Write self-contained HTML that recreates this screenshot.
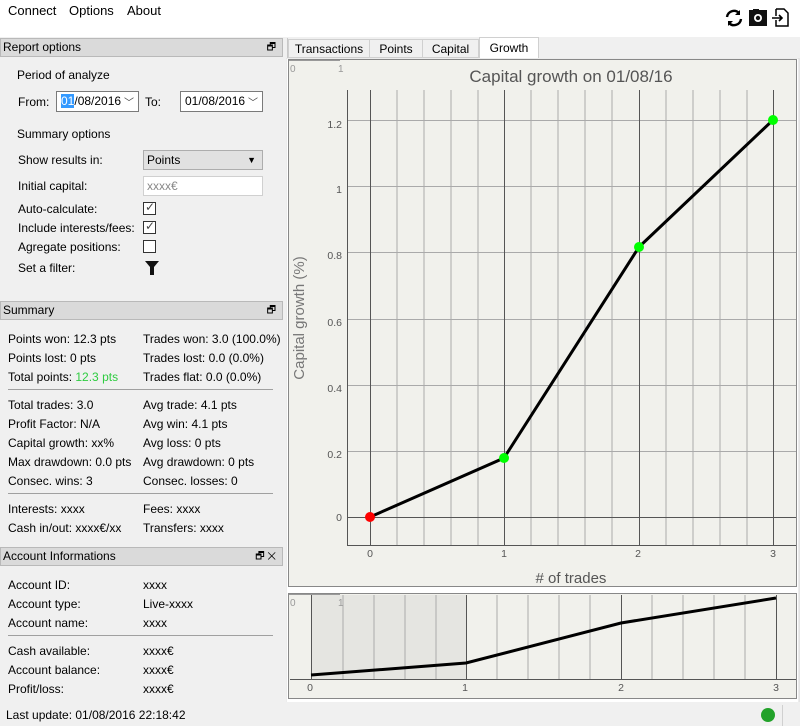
<!DOCTYPE html>
<html><head><meta charset="utf-8"><style>
*{margin:0;padding:0;box-sizing:border-box}
body{width:800px;height:726px;background:#f0f0f0;font-family:"Liberation Sans",sans-serif;font-size:12px;color:#000;position:relative;overflow:hidden}
.a{position:absolute;white-space:nowrap}
.top{position:absolute;left:0;top:0;width:800px;height:37px;background:#fff}
.hdr{position:absolute;left:0;width:283px;height:19px;background:#dadada;border:1px solid #b9b9b9;padding-left:2px;line-height:17px}
.hr{position:absolute;height:1px;background:#a0a0a0;left:8px;width:265px}
.cb{position:absolute;width:13px;height:13px;border:1px solid #333;background:#fff}
.inp{position:absolute;border:1px solid #7a7a7a;background:#fff;height:21px;line-height:19px;padding-left:4px}
</style></head><body>
<div class="top"></div>
<div class="a" style="left:8px;top:3px;font-size:13px">Connect</div>
<div class="a" style="left:69px;top:3px;font-size:13px">Options</div>
<div class="a" style="left:127px;top:3px;font-size:13px">About</div>
<svg class="a" style="left:724px;top:8px" width="70" height="20" viewBox="0 0 70 20">
<path d="M3 9a7 7 0 0 1 12-4" stroke="#000" stroke-width="2.4" fill="none"/><path d="M16 2v5h-5z" fill="#000"/>
<path d="M17 11a7 7 0 0 1-12 4" stroke="#000" stroke-width="2.4" fill="none"/><path d="M4 18v-5h5z" fill="#000"/>
<rect x="25" y="2" width="18" height="16" fill="#111"/><rect x="29" y="1" width="6" height="3" fill="#111"/><circle cx="34" cy="10" r="4" fill="#fff"/><circle cx="34" cy="10" r="2.2" fill="#111"/>
<path d="M52 1h8l4 4v13h-12v-6M52 8v-7" stroke="#000" stroke-width="1.5" fill="none"/><path d="M48 10h10M55 7l3 3-3 3" stroke="#000" stroke-width="1.6" fill="none"/>
</svg>

<div class="hdr" style="top:38px">Report options<span style="position:absolute;right:6px;top:0;font-size:10px">🗗</span></div>
<div class="a" style="left:17px;top:68px">Period of analyze</div>
<div class="a" style="left:18px;top:95px">From:</div>
<div class="inp" style="left:56px;top:91px;width:83px"><span style="background:#3399ff;color:#fff">01</span>/08/2016</div>
<div class="a" style="left:124px;top:94px;font-size:10px;color:#444">﹀</div>
<div class="a" style="left:145px;top:95px">To:</div>
<div class="inp" style="left:180px;top:91px;width:83px">01/08/2016</div>
<div class="a" style="left:248px;top:94px;font-size:10px;color:#444">﹀</div>
<div class="a" style="left:17px;top:127px">Summary options</div>
<div class="a" style="left:18px;top:153px">Show results in:</div>
<div class="a" style="left:143px;top:150px;width:120px;height:20px;background:#e1e1e1;border:1px solid #adadad;padding-left:3px;line-height:18px">Points<span style="position:absolute;right:6px;top:0;font-size:9px">▼</span></div>
<div class="a" style="left:18px;top:179px">Initial capital:</div>
<div class="a" style="left:143px;top:176px;width:120px;height:20px;background:#fff;border:1px solid #d0d0d0;padding-left:3px;line-height:18px;color:#888">xxxx€</div>
<div class="a" style="left:18px;top:202px">Auto-calculate:</div>
<div class="cb" style="left:143px;top:202px"></div><div class="a" style="left:145px;top:200px;font-size:12px;color:#444">✓</div>
<div class="a" style="left:18px;top:221px">Include interests/fees:</div>
<div class="cb" style="left:143px;top:221px"></div><div class="a" style="left:145px;top:219px;font-size:12px;color:#444">✓</div>
<div class="a" style="left:18px;top:240px">Agregate positions:</div>
<div class="cb" style="left:143px;top:240px"></div>
<div class="a" style="left:18px;top:261px">Set a filter:</div>
<svg class="a" style="left:144px;top:260px" width="16" height="16"><path d="M1 1h14l-5 6v8h-4v-8z" fill="#111"/></svg>

<div class="hdr" style="top:301px">Summary<span style="position:absolute;right:6px;top:0;font-size:10px">🗗</span></div>
<div class="a" style="left:8px;top:332px">Points won: 12.3 pts</div>
<div class="a" style="left:8px;top:351px">Points lost: 0 pts</div>
<div class="a" style="left:8px;top:370px">Total points: <span style="color:#2ecc40">12.3 pts</span></div>
<div class="a" style="left:143px;top:332px">Trades won: 3.0 (100.0%)</div>
<div class="a" style="left:143px;top:351px">Trades lost: 0.0 (0.0%)</div>
<div class="a" style="left:143px;top:370px">Trades flat: 0.0 (0.0%)</div>
<div class="hr" style="top:389px"></div>
<div class="a" style="left:8px;top:398px">Total trades: 3.0</div>
<div class="a" style="left:8px;top:417px">Profit Factor: N/A</div>
<div class="a" style="left:8px;top:436px">Capital growth: xx%</div>
<div class="a" style="left:8px;top:455px">Max drawdown: 0.0 pts</div>
<div class="a" style="left:8px;top:474px">Consec. wins: 3</div>
<div class="a" style="left:143px;top:398px">Avg trade: 4.1 pts</div>
<div class="a" style="left:143px;top:417px">Avg win: 4.1 pts</div>
<div class="a" style="left:143px;top:436px">Avg loss: 0 pts</div>
<div class="a" style="left:143px;top:455px">Avg drawdown: 0 pts</div>
<div class="a" style="left:143px;top:474px">Consec. losses: 0</div>
<div class="hr" style="top:493px"></div>
<div class="a" style="left:8px;top:502px">Interests: xxxx</div>
<div class="a" style="left:8px;top:521px">Cash in/out: xxxx€/xx</div>
<div class="a" style="left:143px;top:502px">Fees: xxxx</div>
<div class="a" style="left:143px;top:521px">Transfers: xxxx</div>

<div class="hdr" style="top:547px">Account Informations<span style="position:absolute;right:6px;top:0;font-size:10px">🗗 ✕</span></div>
<div class="a" style="left:8px;top:578px">Account ID:</div><div class="a" style="left:143px;top:578px">xxxx</div>
<div class="a" style="left:8px;top:597px">Account type:</div><div class="a" style="left:143px;top:597px">Live-xxxx</div>
<div class="a" style="left:8px;top:616px">Account name:</div><div class="a" style="left:143px;top:616px">xxxx</div>
<div class="hr" style="top:635px"></div>
<div class="a" style="left:8px;top:644px">Cash available:</div><div class="a" style="left:143px;top:644px">xxxx€</div>
<div class="a" style="left:8px;top:663px">Account balance:</div><div class="a" style="left:143px;top:663px">xxxx€</div>
<div class="a" style="left:8px;top:682px">Profit/loss:</div><div class="a" style="left:143px;top:682px">xxxx€</div>
<div class="a" style="left:6px;top:708px">Last update: 01/08/2016 22:18:42</div>
<div class="a" style="left:287px;top:38px;width:1px;height:686px;background:#c8c8c8"></div>

<!-- tabs -->
<div class="a" style="left:288px;top:39px;width:82px;height:19px;border:1px solid #d0d0d0;background:#f0f0f0;text-align:center;line-height:18px">Transactions</div>
<div class="a" style="left:369px;top:39px;width:54px;height:19px;border:1px solid #d0d0d0;background:#f0f0f0;text-align:center;line-height:18px">Points</div>
<div class="a" style="left:422px;top:39px;width:57px;height:19px;border:1px solid #d0d0d0;background:#f0f0f0;text-align:center;line-height:18px">Capital</div>
<div class="a" style="left:479px;top:37px;width:60px;height:22px;border:1px solid #d0d0d0;border-bottom:none;background:#fff;text-align:center;line-height:20px">Growth</div>
<div class="a" style="left:287px;top:58px;width:513px;height:204px;"></div>

<svg class="a" style="left:286px;top:58px" width="514" height="668" viewBox="286 58 514 668" font-family="Liberation Sans, sans-serif">
<rect x="286" y="58" width="513" height="670" fill="#fff" stroke="#d8d8d8"/>
<rect x="288.5" y="59.5" width="508" height="527" fill="#f1f1ec" stroke="#888"/>
<text x="290" y="72" font-size="10" fill="#999">0</text><text x="338" y="72" font-size="10" fill="#999">1</text>
<line x1="289" y1="60.5" x2="340" y2="60.5" stroke="#999"/>
<text x="571" y="82" font-size="17" fill="#555" text-anchor="middle">Capital growth on 01/08/16</text>
<g stroke="#aaa" stroke-width="1">
<line x1="397" y1="90" x2="397" y2="545"/><line x1="424" y1="90" x2="424" y2="545"/><line x1="451" y1="90" x2="451" y2="545"/><line x1="478" y1="90" x2="478" y2="545"/>
<line x1="531" y1="90" x2="531" y2="545"/><line x1="558" y1="90" x2="558" y2="545"/><line x1="585" y1="90" x2="585" y2="545"/><line x1="612" y1="90" x2="612" y2="545"/>
<line x1="666" y1="90" x2="666" y2="545"/><line x1="693" y1="90" x2="693" y2="545"/><line x1="720" y1="90" x2="720" y2="545"/><line x1="747" y1="90" x2="747" y2="545"/>
<line x1="347" y1="120.5" x2="796" y2="120.5"/><line x1="347" y1="186.5" x2="796" y2="186.5"/><line x1="347" y1="252.5" x2="796" y2="252.5"/><line x1="347" y1="319.5" x2="796" y2="319.5"/><line x1="347" y1="385.5" x2="796" y2="385.5"/><line x1="347" y1="451.5" x2="796" y2="451.5"/>
</g>
<g stroke="#555"><line x1="370.5" y1="90" x2="370.5" y2="545"/><line x1="504.5" y1="90" x2="504.5" y2="545"/><line x1="639.5" y1="90" x2="639.5" y2="545"/><line x1="773.5" y1="90" x2="773.5" y2="545"/>
<line x1="347" y1="517.5" x2="796" y2="517.5"/><line x1="347.5" y1="90" x2="347.5" y2="545"/><line x1="347" y1="545.5" x2="796" y2="545.5"/></g>
<g font-size="10.5" fill="#555" text-anchor="end"><text x="342" y="128">1.2</text><text x="342" y="193">1</text><text x="342" y="259">0.8</text><text x="342" y="326">0.6</text><text x="342" y="392">0.4</text><text x="342" y="458">0.2</text><text x="342" y="521">0</text></g>
<g font-size="10.5" fill="#555" text-anchor="middle"><text x="370" y="557">0</text><text x="504" y="557">1</text><text x="638" y="557">2</text><text x="773" y="557">3</text></g>
<text x="571" y="583" font-size="15" fill="#555" text-anchor="middle"># of trades</text>
<text transform="translate(304 318) rotate(-90)" font-size="15" fill="#777" text-anchor="middle">Capital growth (%)</text>
<polyline points="370,517 504,458 639,247 773,120" fill="none" stroke="#000" stroke-width="3"/>
<circle cx="370" cy="517" r="5" fill="#f00"/><circle cx="504" cy="458" r="5" fill="#0f0"/><circle cx="639" cy="247" r="5" fill="#0f0"/><circle cx="773" cy="120" r="5" fill="#0f0"/>

<rect x="288.5" y="593.5" width="508" height="105" fill="#f1f1ec" stroke="#888"/>
<rect x="311" y="595" width="155" height="84" fill="#e5e5e1"/>
<g stroke="#aaa"><line x1="343" y1="595" x2="343" y2="679"/><line x1="374" y1="595" x2="374" y2="679"/><line x1="405" y1="595" x2="405" y2="679"/><line x1="436" y1="595" x2="436" y2="679"/>
<line x1="497" y1="595" x2="497" y2="679"/><line x1="528" y1="595" x2="528" y2="679"/><line x1="559" y1="595" x2="559" y2="679"/><line x1="590" y1="595" x2="590" y2="679"/>
<line x1="652" y1="595" x2="652" y2="679"/><line x1="683" y1="595" x2="683" y2="679"/><line x1="714" y1="595" x2="714" y2="679"/><line x1="745" y1="595" x2="745" y2="679"/></g>
<g stroke="#555"><line x1="311.5" y1="595" x2="311.5" y2="679"/><line x1="466.5" y1="595" x2="466.5" y2="679"/><line x1="621.5" y1="595" x2="621.5" y2="679"/><line x1="776.5" y1="595" x2="776.5" y2="679"/><line x1="290" y1="679.5" x2="796" y2="679.5"/></g>
<line x1="289" y1="594.5" x2="340" y2="594.5" stroke="#999"/>
<text x="290" y="606" font-size="10" fill="#999">0</text><text x="338" y="606" font-size="10" fill="#999">1</text>
<polyline points="311,675 466,663 621,623 776,598" fill="none" stroke="#000" stroke-width="3"/>
<g font-size="10.5" fill="#555" text-anchor="middle"><text x="310" y="691">0</text><text x="465" y="691">1</text><text x="621" y="691">2</text><text x="776" y="691">3</text></g>
<rect x="286" y="702" width="514" height="24" fill="#f0f0f0"/>
<circle cx="768" cy="715" r="7" fill="#22a22a"/>
<line x1="782.5" y1="705" x2="782.5" y2="726" stroke="#d0d0d0"/>
</svg>
</body></html>
